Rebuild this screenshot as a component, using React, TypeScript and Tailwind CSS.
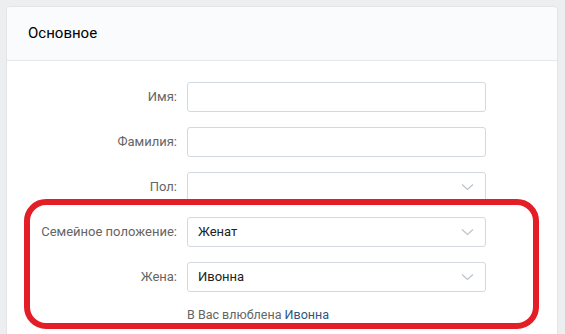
import React from 'react';

const font = { fontFamily: 'Roboto, "Open Sans", "Liberation Sans", sans-serif' };

const Chevron: React.FC = () => (
  <svg width="13" height="8" viewBox="0 0 13 8" className="absolute right-[11px] top-1/2 -translate-y-1/2">
    <path d="M1 1.5l5.5 5 5.5-5" fill="none" stroke="#bcc3cb" strokeWidth="1.2" />
  </svg>
);

interface RowProps {
  label: string;
  value?: string;
  select?: boolean;
}

const Row: React.FC<RowProps> = ({ label, value, select }) => (
  <div className="flex items-center">
    <div className="w-[170px] text-right text-[13px] text-[#656565]">{label}</div>
    <div className="relative ml-[10px] h-[30px] w-[299px] rounded-[3px] border border-[#d3d9de] bg-white flex items-center px-[10px] text-[13px] text-[#222]">
      {value}
      {select && <Chevron />}
    </div>
  </div>
);

export default function App() {
  return (
    <div className="relative h-[334px] w-[565px] overflow-hidden bg-[#edeef0] pl-[7px] pt-[7px] pr-[8px]" style={font}>
      <div className="h-[340px] rounded-t-[4px] bg-white shadow-[0_0_0_1px_#e3e4e8]">
        <div className="h-[54px] border-b border-[#e7e8ec] bg-[#fafbfc] pl-[21px] flex items-center rounded-t-[4px]">
          <span className="text-[15px] text-black">Основное</span>
        </div>
        <div className="flex flex-col gap-[15px] pt-[21px]">
          <Row label="Имя:" />
          <Row label="Фамилия:" />
          <Row label="Пол:" select />
          <Row label="Семейное положение:" value="Женат" select />
          <Row label="Жена:" value="Ивонна" select />
          <div className="pl-[180px] text-[12.5px] leading-[16px] text-[#656565]">
            В Вас влюблена <span className="text-[#2a5885]">Ивонна</span>
          </div>
        </div>
      </div>
      <div className="absolute left-[24px] top-[199px] h-[130px] w-[515px] rounded-[22px] border-[6px] border-[#e41e26]" />
    </div>
  );
}
